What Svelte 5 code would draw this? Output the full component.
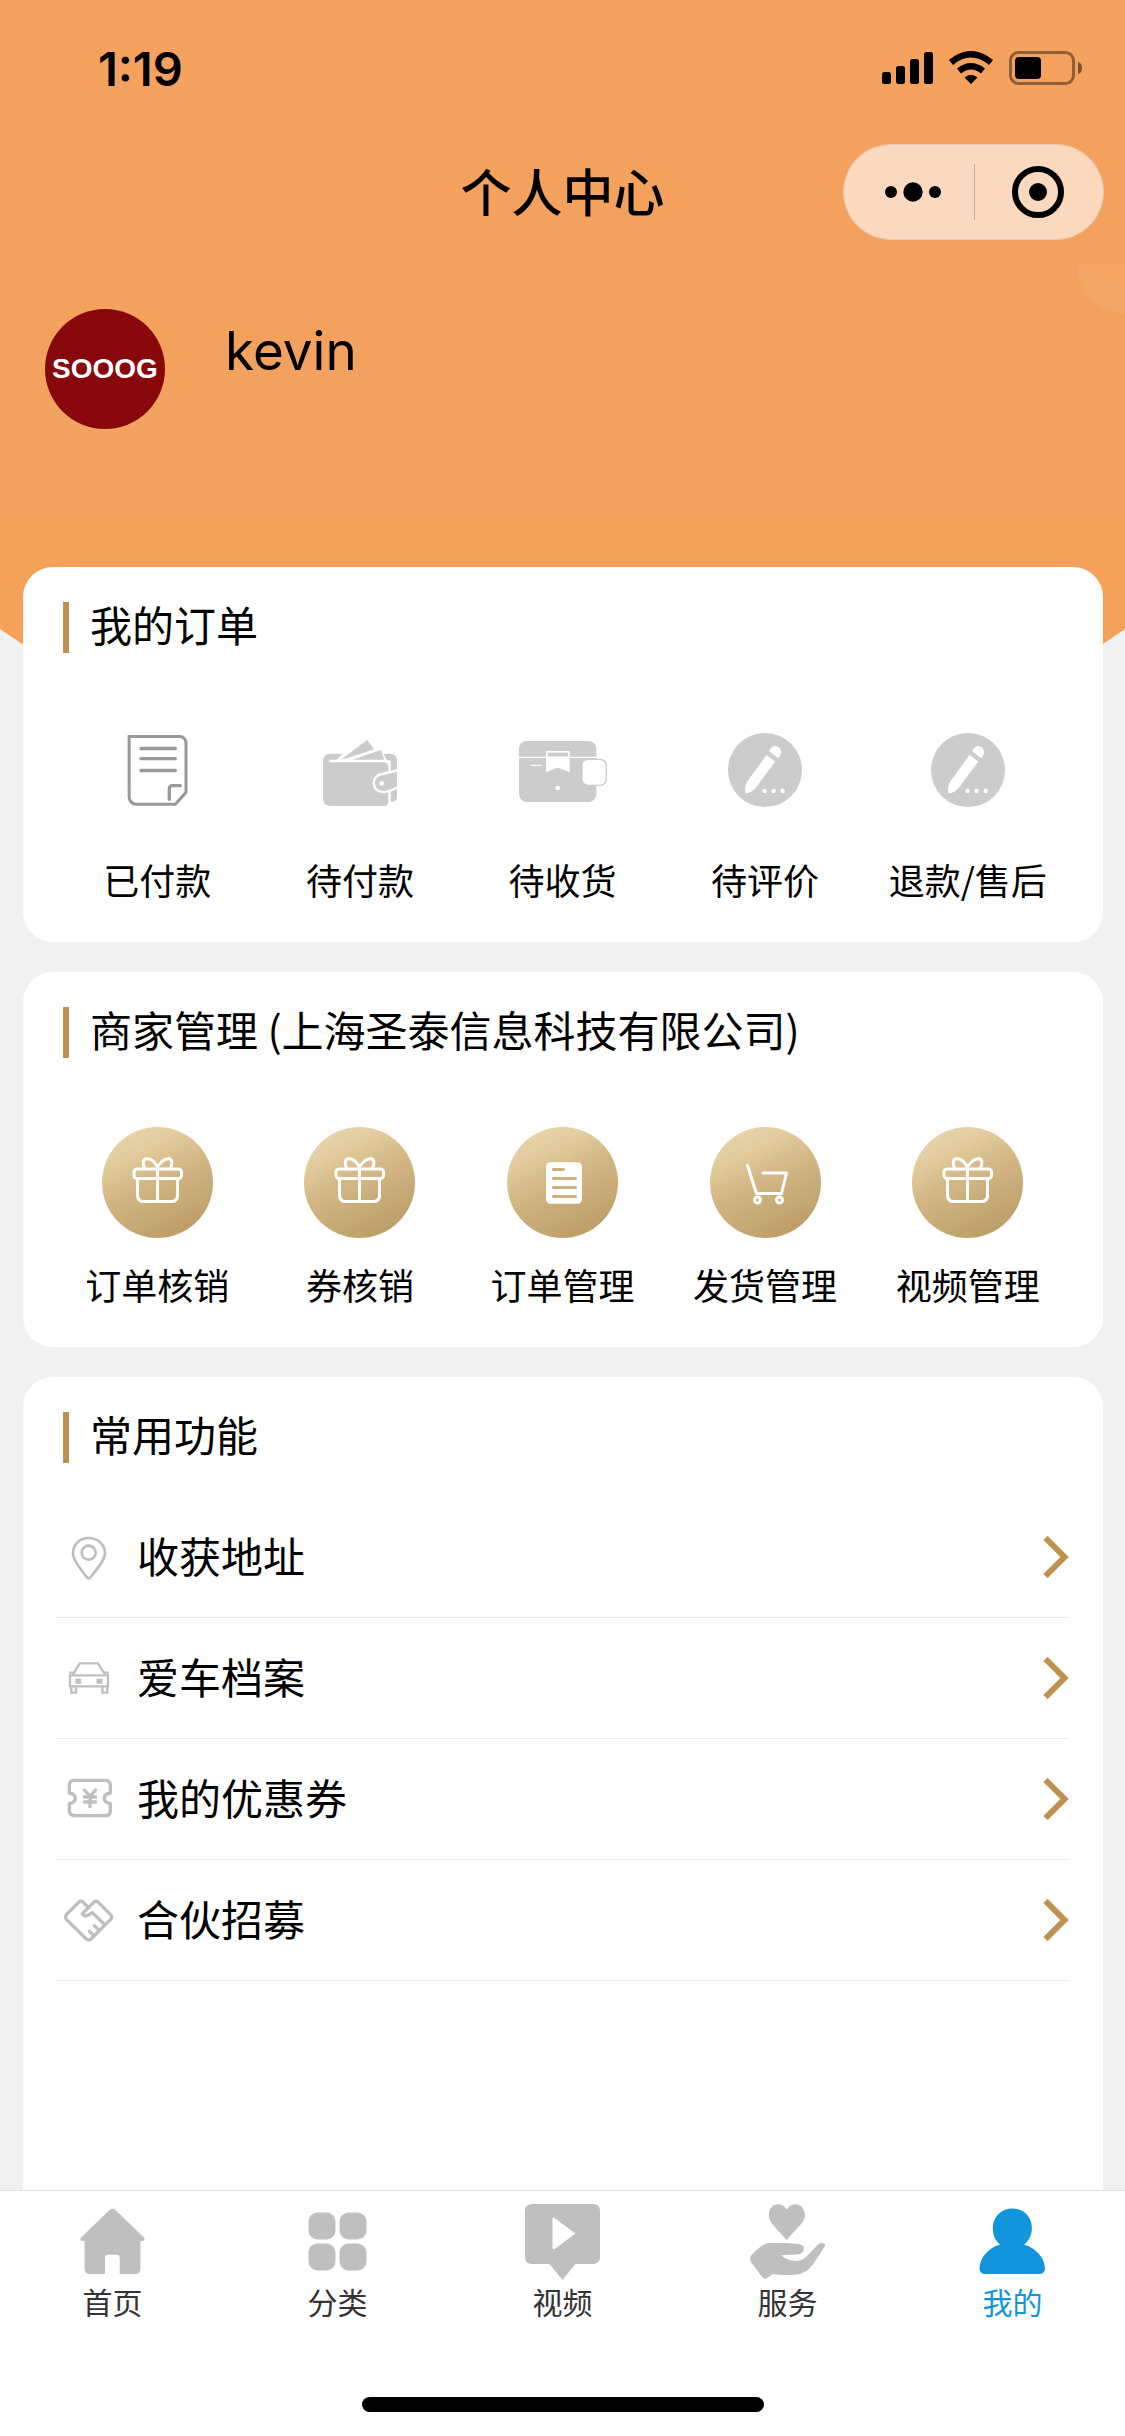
<script>
  const orders = [
    { icon: 'note', label: '已付款' },
    { icon: 'wallet', label: '待付款' },
    { icon: 'parcel', label: '待收货' },
    { icon: 'pen', label: '待评价' },
    { icon: 'pen', label: '退款/售后' },
  ];
  const merchant = [
    { icon: 'gift', label: '订单核销' },
    { icon: 'gift', label: '券核销' },
    { icon: 'list', label: '订单管理' },
    { icon: 'cart', label: '发货管理' },
    { icon: 'gift', label: '视频管理' },
  ];
  const features = [
    { icon: 'pin', label: '收获地址' },
    { icon: 'car', label: '爱车档案' },
    { icon: 'coupon', label: '我的优惠券' },
    { icon: 'handshake', label: '合伙招募' },
  ];
  const tabs = [
    { icon: 'home', label: '首页' },
    { icon: 'grid', label: '分类' },
    { icon: 'video', label: '视频' },
    { icon: 'service', label: '服务' },
    { icon: 'user', label: '我的', active: true },
  ];
</script>

{#snippet orderIcon(name)}
  {#if name === 'note'}
    <svg class="order-icon" viewBox="-8 0 300 300" aria-hidden="true">
      <g fill="none" stroke="#999" stroke-width="9">
        <path d="M58.500 49.500H210a19 19 0 0 1 19 19V217L197 253H80a22 22 0 0 1-21.500-22Z" />
        <path d="M94 85.500H197M94 116H197M94 151.500H197M179 238V207q0-10 10-10H212" stroke-width="10" stroke-linecap="round" />
      </g>
    </svg>
  {:else if name === 'wallet'}
    <svg class="order-icon" viewBox="600 0 300 300" aria-hidden="true">
      <g fill="#ccc">
        <path d="M659 101H699L680 119H660q-5 4 0 8H824q10 1 11 14V245q-2 12-13 13H660q-20-2-21-20V121q2-18 20-20Z" />
        <path d="M772 60 792 88 714 114 692 119Z" />
        <path d="M813 90 823 119H727Z" />
        <path d="M820 101H843q16 2 18 18V235q-2 9-14 10H842V121H831Z" />
      </g>
      <path d="M866 150 818 162a27 27 0 0 0 0 54Q830 218 866 201Z" fill="#ccc" stroke="#fff" stroke-width="7" />
      <path d="M861 140h10v70h-10z" fill="#fff" />
      <circle cx="815" cy="190" r="7" fill="#fff" />
    </svg>
  {:else if name === 'parcel'}
    <svg class="order-icon" viewBox="1206 0 300 300" aria-hidden="true">
      <rect x="1227" y="63" width="232" height="183" rx="24" fill="#ccc" />
      <path d="M1227 112H1459" stroke="#fff" stroke-width="4" />
      <path d="M1310 95H1377V154L1343 141 1310 154Z" fill="#fff" stroke="#fff" stroke-width="4" />
      <path d="M1313 98H1374V109H1313Z" fill="#ccc" />
      <path d="M1265 136H1293" stroke="#fff" stroke-width="4" stroke-linecap="round" />
      <circle cx="1343" cy="204" r="7" fill="#fff" />
      <rect x="1416" y="118" width="73" height="78" rx="18" fill="#fff" stroke="#ccc" stroke-width="4" />
    </svg>
  {:else}
    <svg class="order-icon" viewBox="0 0 100 100" aria-hidden="true">
      <circle cx="50" cy="50" r="37" fill="#ccc" />
      <g fill="#fff">
        <path d="M51.500 35 60.300 41.500 41 67.500Q36 73.500 30.500 73.300 29 67 32 62Z" />
        <path d="M54.300 31.500Q56 26 60.500 26 66.500 27 66 33 65.500 36 63.200 38.300Z" />
        <circle cx="49.600" cy="71" r="2.200" /><circle cx="58.600" cy="71" r="2.200" /><circle cx="67.600" cy="71" r="2.200" />
      </g>
    </svg>
  {/if}
{/snippet}

{#snippet merchantIcon(name)}
  <svg class="merchant-icon" viewBox="0 0 111 111" aria-hidden="true">
    <g fill="none" stroke="#fff" stroke-width="3" stroke-linejoin="round" stroke-linecap="round">
      {#if name === 'gift'}
        <rect x="32" y="42" width="47.500" height="9.500" rx="3" />
        <path d="M35.500 52V69Q36 74.500 41.500 74.500H69.500Q75 74.500 75.500 69V52M55.500 42V74" />
        <path d="M42.500 41Q39.500 33 44 31.700 51 31 55.500 40 61 31 67 31.700 72 33 68.500 41" />
      {:else if name === 'list'}
        <rect x="40.500" y="36.700" width="33" height="38.600" rx="3" fill="#fff" />
        <path d="M46.500 42.500H56.500M46.500 51.500H68.500M46.500 60.500H68.500M46.500 69.500H68.500" stroke="#cdb07c" />
      {:else}
        <path d="M37.500 38.500 46.500 66.500H71.500L76.500 46H53" />
        <circle cx="47.500" cy="73" r="3" /><circle cx="69.500" cy="73" r="3" />
      {/if}
    </g>
  </svg>
{/snippet}

{#snippet featureIcon(name)}
  {#if name === 'pin'}
    <svg class="row-icon" viewBox="27 21 180 180" aria-hidden="true">
      <path d="M116 54C88 54 69 75 69 100 69 120 90 147 111 172Q116 178 121 172C142 147 165 120 165 100 165 75 144 54 116 54Z" />
      <circle cx="116" cy="98" r="21" />
    </svg>
  {:else if name === 'car'}
    <svg class="row-icon thin" viewBox="27 384 180 180" aria-hidden="true">
      <path d="M69 463 89 430H144L165 463M57 458H72M162 458H177M60 466H174V499H60ZM64 499V518H78V501M157 501V518H172V499" />
      <path d="M80 480H90V488H80ZM143 480H154V488H143Z" fill="#bfbfbf" />
    </svg>
  {:else if name === 'coupon'}
    <svg class="row-icon bold" viewBox="27 747 180 180" aria-hidden="true">
      <path d="M58 819V794Q59 781 72 781H168Q180 782 181 794V819Q163 822 163 834 163 847 181 851V875Q180 886 168 887H72Q60 886 58 875V851Q76 847 76 834 76 822 58 819Z" />
      <path d="M103 810 120 829 137 810M103 831H137M103 846H137M120 831V860" />
    </svg>
  {:else}
    <svg class="row-icon bold" viewBox="27 1110 180 180" aria-hidden="true">
      <path d="M116 1163 100 1147Q93 1141 86 1147L49 1184Q44 1191 49 1198L109 1257Q116 1263 123 1257L182 1198Q188 1191 182 1184L145 1147Q138 1141 131 1147L97 1181Q103 1191 115 1185L127 1178 163 1213M133 1217 148 1232M118 1234 133 1248" />
    </svg>
  {/if}
{/snippet}

{#snippet tabIcon(name)}
  <svg class="tab-icon" viewBox="0 0 81 81" aria-hidden="true">
    {#if name === 'home'}
      <path d="M37.500 10Q40.500 7.500 43.500 10L72 37.500Q74 41 70 41H68.500V69Q68 74 63.500 74H47.700V58Q47.500 54.700 44 54.700H36.500Q33 54.700 33 58V74H17.500Q13 74 12.500 69V41H11Q7 41 9 37.500Z" />
    {:else if name === 'grid'}
      <rect x="11.500" y="12.500" width="27" height="27" rx="9" /><rect x="42.500" y="12.500" width="27" height="27" rx="9" />
      <rect x="11.500" y="43.500" width="27" height="27" rx="9" /><rect x="42.500" y="43.500" width="27" height="27" rx="9" />
    {:else if name === 'video'}
      <path fill-rule="evenodd" d="M10 4H71Q78 4 78 11V57Q78 64 71 64H53.500L40.500 80 27.500 64H10Q3 64 3 57V11Q3 4 10 4ZM30.500 18.500V48.500Q31 50 32.500 49L53.500 33.500 32.500 18Q31 17 30.500 18.500Z" />
    {:else if name === 'service'}
      <path d="M39.800 9.500C34 1 22 3 21.800 15 22 22 27 25.500 39.800 40 52 25.500 58 22 58 15 57 3 45 1 39.800 9.500Z" />
      <path d="M21.500 43Q40 42.500 52 44 57 45 57 48.500 56.500 54 50 54.500L34 55.300Q41 61 48.500 61 56 61 61 55L71 44.500Q74 42 77.500 44 79 45 77 47.500L67 63Q60 74 48 74.700 35 75.500 25.800 74L19.500 78.500Q17 79.500 15.500 77.500L4.500 63Q1.500 58 5 54.500 16 43 21.500 43Z" />
    {:else}
      <path d="M28 44.500C15 34 20 8.500 40.500 8.500S66 34 52 44.500C64 48 73 58 73 69Q72.500 74 67 74H13.500Q8 74 7.500 69C7.500 58 16 48 28 44.500Z" />
    {/if}
  </svg>
{/snippet}

<div class="page">
  <header class="hero">
    <svg class="bubble" viewBox="0 0 48 50" aria-hidden="true">
      <path d="M0 0H48V50C20 48 1 30 0 0Z" fill="#f4a561" />
      <path d="M0 0 36 27H48V50C20 48 1 30 0 0Z" fill="#f4a664" />
    </svg>
    <div class="status">
      <time>1:19</time>
      <svg class="status-icons" viewBox="0 0 202 36" aria-hidden="true">
        <rect x="0" y="21" width="9" height="12" rx="2.500" /><rect x="14" y="15" width="9" height="18" rx="2.500" />
        <rect x="28" y="8" width="9" height="25" rx="2.500" /><rect x="42" y="1" width="9" height="32" rx="2.500" />
        <g fill="none" stroke="#000" stroke-width="6.500">
          <path d="M69 11.500Q89 -5 109 11.500" /><path d="M77 20Q89 10.500 101 20" />
        </g>
        <path d="M82.500 26.500Q89 21 95.500 26.500L89 33Z" />
        <rect x="128.500" y="1.500" width="63" height="31" rx="8" fill="none" stroke="#000" stroke-opacity=".42" stroke-width="3" />
        <rect x="133" y="6" width="26" height="22" rx="4" />
        <path d="M196 11Q200 12 200 17 200 22 196 23Z" fill-opacity=".5" />
      </svg>
    </div>
    <div class="titlebar">
      <h1>个人中心</h1>
      <div class="capsule">
        <button aria-label="更多">
          <svg width="58" height="20" viewBox="0 0 58 20"><circle cx="7" cy="10" r="6" /><circle cx="29" cy="10" r="9.700" /><circle cx="51" cy="10" r="6" /></svg>
        </button>
        <button aria-label="关闭">
          <svg width="52" height="52" viewBox="0 0 52 52"><circle cx="26" cy="26" r="23" fill="none" stroke="#000" stroke-width="6" /><circle cx="26" cy="26" r="9" /></svg>
        </button>
      </div>
    </div>
    <div class="profile">
      <div class="avatar">SOOOG</div>
      <div class="name">kevin</div>
    </div>
  </header>

  <main>
    <section class="card">
      <h2>我的订单</h2>
      <div class="tiles">
        {#each orders as item}
          <button class="tile">{@render orderIcon(item.icon)}<span>{item.label}</span></button>
        {/each}
      </div>
    </section>

    <section class="card">
      <h2>商家管理 (上海圣泰信息科技有限公司)</h2>
      <div class="tiles merchant">
        {#each merchant as item}
          <button class="tile">{@render merchantIcon(item.icon)}<span>{item.label}</span></button>
        {/each}
      </div>
    </section>

    <section class="card last">
      <h2>常用功能</h2>
      <ul>
        {#each features as item}
          <li>
            <a class="row" href="#{item.icon}">
              {@render featureIcon(item.icon)}
              <span>{item.label}</span>
              <svg class="chevron" viewBox="0 0 26 42" aria-hidden="true"><path d="M2.500 2 21.500 21 2.500 40" /></svg>
            </a>
          </li>
        {/each}
      </ul>
    </section>
  </main>

  <footer>
    <nav>
      {#each tabs as tab}
        <a class="tab" class:active={tab.active} href="#{tab.icon}" aria-current={tab.active ? 'page' : undefined}>
          {@render tabIcon(tab.icon)}<span>{tab.label}</span>
        </a>
      {/each}
    </nav>
    <div class="home-bar"></div>
  </footer>
</div>

<style>
  :global(body) { margin: 0; }
  .page {
    display: flex;
    flex-direction: column;
    min-height: 100vh;
    background: #f1f1f1;
    color: #000;
    font-family: "Noto Sans CJK SC", sans-serif;
  }
  svg { display: block; flex: none; }
  button {
    padding: 0;
    border: 0;
    background: none;
    color: inherit;
    font: inherit;
    cursor: pointer;
  }
  a { color: inherit; text-decoration: none; }

  .hero {
    position: relative;
    box-sizing: border-box;
    height: 667px;
    background: linear-gradient(#f5a25f 0, #f4a15d 264px, #f1a35f 430px, #f5a15a 560px, #f5a158 100%);
    clip-path: polygon(0 0, 100% 0, 100% 629px, 95% 667px, 5% 667px, 0 629px);
  }
  .bubble { position: absolute; right: 0; top: 264px; width: 48px; height: 50px; }
  .status {
    display: flex;
    align-items: center;
    justify-content: space-between;
    height: 138px;
    padding: 0 41px 0 98px;
  }
  time { font: 600 47px/60px Inter, sans-serif; }
  .status-icons { width: 202px; height: 36px; }
  .titlebar {
    display: grid;
    grid-template-columns: 1fr auto 1fr;
    align-items: center;
    height: 108px;
    padding: 0 21px;
  }
  h1 { grid-column: 2; margin: 0; padding-bottom: 4px; font-size: 51px; line-height: 72px; font-weight: 500; }
  .capsule {
    display: flex;
    justify-self: end;
    box-sizing: border-box;
    width: 261px;
    height: 96px;
    border: 1px solid #e5c9b2;
    border-radius: 48px;
    background: #fbd9bf;
  }
  .capsule button { position: relative; width: 50%; display: flex; align-items: center; justify-content: center; }
  .capsule button + button::before {
    content: "";
    position: absolute;
    left: 0;
    top: 19px;
    width: 1px;
    height: 56px;
    background: #c9ae99;
  }
  .capsule button:first-child { padding-left: 8px; }
  .profile { display: flex; gap: 60px; padding: 63px 45px 0; }
  .avatar {
    display: flex;
    align-items: center;
    justify-content: center;
    width: 120px;
    height: 120px;
    border-radius: 50%;
    background: #87070a;
    color: #fff;
    font: 700 28px/40px "Liberation Sans", sans-serif;
  }
  .name { padding-top: 6px; font: 400 53px/72px Inter, sans-serif; }

  main {
    position: relative;
    flex: 1;
    display: flex;
    flex-direction: column;
    gap: 30px;
    margin-top: -100px;
    padding: 0 22px 0 23px;
  }
  .card {
    box-sizing: border-box;
    min-height: 375px;
    padding: 35px 34px 0 33px;
    border-radius: 30px;
    background: #fff;
  }
  .last { flex: 1; border-radius: 30px 30px 0 0; }
  h2 {
    display: flex;
    gap: 21px;
    margin: 0 7px;
    font-size: 42px;
    line-height: 44px;
    font-weight: 400;
  }
  h2::before { content: ""; flex: none; width: 6px; height: 51px; background: #bf914e; }
  .tiles { display: grid; grid-template-columns: repeat(5, 1fr); padding-top: 67px; }
  .tile { display: flex; flex-direction: column; align-items: center; gap: 32px; }
  .tile span { font-size: 36px; line-height: 54px; white-space: nowrap; }
  .order-icon { width: 100px; height: 100px; }
  .merchant { padding-top: 69px; }
  .merchant .tile { gap: 19px; }
  .merchant-icon {
    width: 111px;
    height: 111px;
    border-radius: 50%;
    background: linear-gradient(155deg, #e8d5ae 8%, #e2cb9d 26%, #d2b684 48%, #c6a974 70%, #bb9961 96%);
  }

  ul { margin: 0; padding: 34px 0 0; list-style: none; }
  li { border-bottom: 1px solid #ebebeb; }
  .row { display: flex; align-items: center; height: 120px; padding-left: 3px; }
  .row span { flex: 1; padding: 0 0 4px 18px; font-size: 42px; line-height: 60px; }
  .row-icon { width: 60px; height: 60px; fill: none; stroke: #bfbfbf; stroke-width: 8; stroke-linecap: round; stroke-linejoin: round; }
  .row-icon.thin { stroke-width: 7; stroke-linecap: butt; stroke-linejoin: miter; }
  .row-icon.bold { stroke-width: 10; }
  .chevron { width: 26px; height: 42px; fill: none; stroke: #bf914e; stroke-width: 6; }

  footer { position: relative; box-sizing: border-box; min-height: 246px; border-top: 1px solid #e2e2e2; background: #fff; }
  nav { display: grid; grid-template-columns: repeat(5, 1fr); padding-top: 9px; }
  .tab { display: flex; flex-direction: column; align-items: center; color: #333; }
  .tab-icon { width: 81px; height: 81px; fill: #bfbfbf; }
  .tab span { font-size: 30px; line-height: 40px; }
  .active { color: #1296db; }
  .active .tab-icon { fill: #1296db; }
  .home-bar { width: 402px; height: 15px; margin: 76px auto 0; border-radius: 8px; background: #000; }
</style>
